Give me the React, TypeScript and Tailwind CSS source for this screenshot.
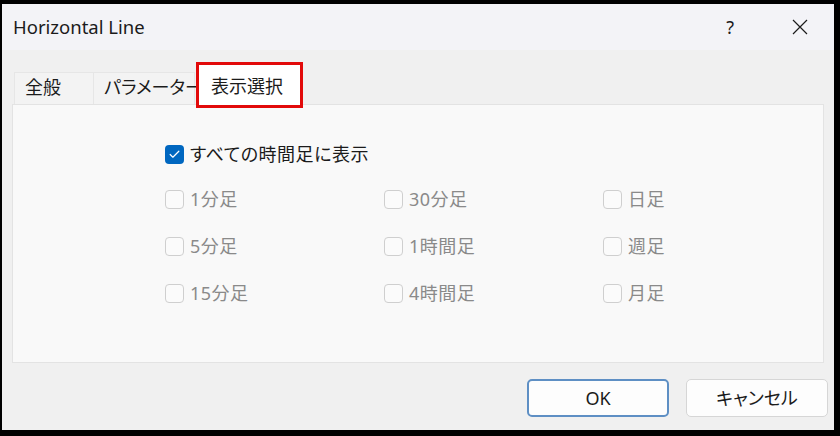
import { Check } from "lucide-react";

const font = { fontFamily: "'Segoe UI', 'Noto Sans', 'Noto Sans CJK JP', sans-serif" };

function Box({ label, checked = false, disabled = false }: { label: string; checked?: boolean; disabled?: boolean }) {
  return (
    <div className="flex items-center h-[20px]">
      {checked ? (
        <div className="w-[19px] h-[19px] shrink-0 rounded-[4px] bg-[#0067c0] flex items-center justify-center">
          <Check className="w-[13px] h-[13px] text-white" strokeWidth={2.2} />
        </div>
      ) : (
        <div className="w-[19px] h-[19px] shrink-0 rounded-[4px] border border-[#cfcfcf] bg-[#fbfbfb]" />
      )}
      <span
        className={`ml-[6px] text-[18px] leading-none whitespace-nowrap tracking-[0.5px] ${
          disabled ? "text-[#8a8a8a]" : "text-[#1b1b1b]"
        }`}
      >
        {label}
      </span>
    </div>
  );
}

const items = [
  ["1分足", "30分足", "日足"],
  ["5分足", "1時間足", "週足"],
  ["15分足", "4時間足", "月足"],
];

export default function App() {
  return (
    <div className="w-[840px] h-[436px] bg-black pt-[4px] pl-[2px] [font-feature-settings:'palt']" style={font}>
      <div className="w-[832px] h-[426px] bg-[#f0f0f0] flex flex-col">
        <div className="h-[46px] bg-[#f3f3f7] flex items-center pl-[11px] pr-[20px]">
          <span className="text-[18.5px] text-[#1b1b1b] flex-1">Horizontal Line</span>
          <span className="text-[18px] text-[#1b1b1b] mr-[58px]">?</span>
          <svg width="16" height="16" viewBox="0 0 16 16" className="mr-[6px]">
            <path d="M1 1 L15 15 M15 1 L1 15" stroke="#1b1b1b" strokeWidth="1.2" />
          </svg>
        </div>

        <div className="flex items-end pl-[12px] pt-[8px] h-[54px]">
          <div className="w-[80px] h-[32px] bg-[#f3f3f3] border border-[#e6e6e6] border-b-0 flex items-center pl-[10px] pb-[2px] text-[18px] text-[#1b1b1b] whitespace-nowrap">
            全般
          </div>
          <div className="w-[101px] h-[32px] bg-[#f3f3f3] border border-[#e6e6e6] border-b-0 border-l-0 flex items-center pl-[10px] pb-[2px] text-[18px] text-[#1b1b1b] whitespace-nowrap">
            パラメーター
          </div>
          <div className="relative z-10 ml-[1px] mb-[-4px] w-[107px] h-[46px] bg-white border-[3px] border-[#e20a0a] flex items-center pl-[12px] pt-[2px] text-[18px] text-[#1b1b1b] whitespace-nowrap">
            表示選択
          </div>
        </div>

        <div className="ml-[10px] mr-[10px] h-[259px] bg-[#f9f9f9] border border-[#e3e3e3] pl-[152px] pt-[39px]">
          <Box label="すべての時間足に表示" checked />
          <div className="grid grid-cols-[219px_219px_100px] gap-y-[27px] mt-[25px]">
            {items.flat().map((t) => (
              <Box key={t} label={t} disabled />
            ))}
          </div>
        </div>

        <div className="flex justify-end gap-[17px] pt-[16px] pr-[6px]">
          <button className="w-[142px] h-[38px] rounded-[5px] bg-[#fdfdfd] border-2 border-[#5e8fc4] text-[18px] text-[#1b1b1b]">
            OK
          </button>
          <button className="w-[142px] h-[38px] rounded-[5px] bg-[#fdfdfd] border border-[#d6d6d6] text-[18px] text-[#1b1b1b]">
            キャンセル
          </button>
        </div>
      </div>
    </div>
  );
}
